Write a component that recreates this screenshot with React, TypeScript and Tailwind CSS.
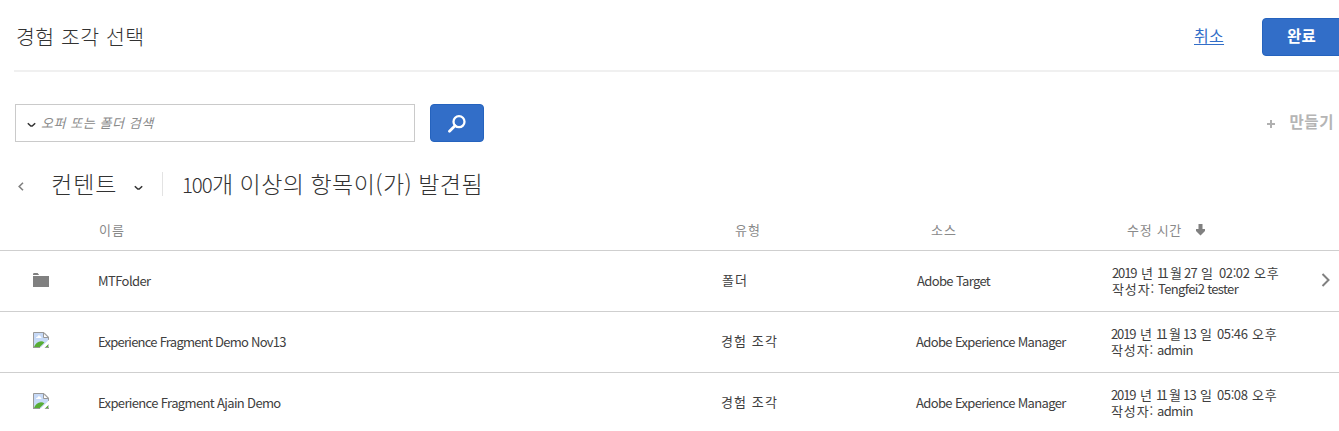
import React from "react";

type Item = {
  kind: "folder" | "image";
  name: string;
  nameClass: string;
  type: string;
  source: string;
  day: string;
  time: string;
  author: string;
};

const items: Item[] = [
  {
    kind: "folder",
    name: "MTFolder",
    nameClass: "tracking-[-0.58px]",
    type: "폴더",
    source: "Adobe Target",
    day: "27",
    time: "02:02",
    author: "Tengfei2 tester",
  },
  {
    kind: "image",
    name: "Experience Fragment Demo Nov13",
    nameClass: "tracking-[-0.74px]",
    type: "경험 조각",
    source: "Adobe Experience Manager",
    day: "13",
    time: "05:46",
    author: "admin",
  },
  {
    kind: "image",
    name: "Experience Fragment Ajain Demo",
    nameClass: "tracking-[-0.64px]",
    type: "경험 조각",
    source: "Adobe Experience Manager",
    day: "13",
    time: "05:08",
    author: "admin",
  },
];

function Chevron() {
  return (
    <svg width="9" height="6" viewBox="0 0 9 6" fill="none" className="shrink-0">
      <path d="M.8 1.2L3.8 4.1H5.2L8.2 1.2" stroke="#333" strokeWidth="1.5" />
    </svg>
  );
}

function FolderIcon() {
  return (
    <svg width="16" height="14" viewBox="0 0 16 14" fill="#808080">
      <path d="M0 2V1.2Q0 0 1.2 0H4.6L6.2 2Z" />
      <path d="M0 3H16V14H0Z" />
    </svg>
  );
}

function MissingImage() {
  return (
    <svg width="16" height="16" viewBox="0 0 16 16" fill="none">
      <path d="M.5 .5H11L15.5 5V15.5H.5Z" fill="#c6d9f7" />
      <path d="M3 6Q3 4.4 4.6 4.4Q5.2 2.7 6.6 3.4Q7.9 3.8 7.7 4.8Q8.7 5 8.5 6Z" fill="#fff" />
      <path d="M1 15Q3.4 9.4 8 9.3Q10 9.3 11.4 10.6L6.8 15Z" fill="#57ad35" />
      <path d="M12 15L15 12V15Z" fill="#57ad35" />
      <path d="M.5 16V.5H11L15.5 5V8M0 15.5H7M11.5 15.5H16V12" stroke="#999" />
      <path d="M10.5 .8V5.5H15.4Z" fill="#fff" stroke="#999" />
      <path d="M7.2 16L16 7.4V11.4L11.4 16Z" fill="#fff" />
    </svg>
  );
}

function Row({ item }: { item: Item }) {
  const folder = item.kind === "folder";
  return (
    <div className="flex h-[61px] items-center border-t border-[#cfcfcf] pl-[33px] text-[13px] leading-4 text-[#404040]">
      <div className={folder ? "w-[65px] shrink-0 pb-0.5" : "w-[65px] shrink-0 pb-[5px]"}>
        {folder ? <FolderIcon /> : <MissingImage />}
      </div>
      <div className={`w-[624px] shrink-0 ${item.nameClass}`}>{item.name}</div>
      <div className={`w-[195px] shrink-0 pb-0.5 tracking-[1.1px] ${folder ? "" : "-ml-px"}`}>{item.type}</div>
      <div className="w-[195px] shrink-0 tracking-[-0.64px]">{item.source}</div>
      <div className="w-[208px] shrink-0">
        <div className="flex">
          <span className="w-[29px] tracking-[-1.1px]">2019</span>
          <span className="w-[16px]">년</span>
          <span className="w-[13px] tracking-[-2.6px]">11</span>
          <span className="w-[14px]">월</span>
          <span className="w-[17px] tracking-[-0.8px]">{item.day}</span>
          <span className={folder ? "w-[18px]" : "w-[17px]"}>일</span>
          <span className="w-[35px] tracking-[-0.4px]">{item.time}</span>
          <span className="tracking-[0.8px]">오후</span>
        </div>
        <div className="flex">
          <span className="w-[46px] tracking-[0.9px]">작성자:</span>
          <span className="tracking-[-0.64px]">{item.author}</span>
        </div>
      </div>
      {folder && (
        <svg width="10" height="14" viewBox="0 0 10 14" fill="none" className="mb-0.5 ml-px shrink-0">
          <path d="M1.5 1L7.5 7L1.5 13" stroke="#808080" strokeWidth="2" />
        </svg>
      )}
    </div>
  );
}

export default function App() {
  return (
    <div
      lang="ko"
      className="flex h-[431px] w-[1339px] flex-col overflow-hidden whitespace-nowrap bg-white font-['Noto_Sans_CJK_KR',sans-serif] text-[#4b4b4b]"
    >
      <header className="ml-[14px] flex h-[72px] shrink-0 items-center border-b-2 border-[#f0f0f0] pl-0.5">
        <h1 className="w-[1178px] shrink-0 pt-0.5 text-[20.5px] font-light leading-7 tracking-[0.5px] text-[#323232]">경험 조각 선택</h1>
        <a className="w-[68px] shrink-0 text-[16px] leading-6 tracking-[0.3px] text-[#326ec8] underline underline-offset-2">취소</a>
        <button className="mt-1 h-[38px] w-[90px] shrink-0 rounded-l border border-[#2563be] bg-[#326ec8] pb-0.5 pl-6 text-left text-[15.5px] font-bold tracking-[0.3px] text-white">
          완료
        </button>
      </header>

      <div className="mt-8 flex h-[38px] shrink-0 items-center pl-[15px]">
        <div className="flex h-[38px] w-[400px] items-center gap-[5px] border border-[#cacaca] pl-[11px]">
          <div className="pt-1">
            <Chevron />
          </div>
          <span className="pb-px text-[13px] italic tracking-[0.55px] text-[#8a8a8a]">오퍼 또는 폴더 검색</span>
        </div>
        <button className="ml-[15px] flex h-[38px] w-[54px] items-center justify-center rounded border border-[#2563be] bg-[#326ec8]">
          <svg width="18" height="18" viewBox="0 0 18 18" fill="none" className="mt-0.5">
            <circle cx="11" cy="6.7" r="5.5" stroke="#fff" strokeWidth="2.3" />
            <path d="M7 10.7L1.5 16.2" stroke="#fff" strokeWidth="2.8" strokeLinecap="round" />
          </svg>
        </button>
        <div className="ml-auto flex items-center gap-[14px] pr-[5px] text-[#b5b5b5]">
          <svg width="8" height="8" viewBox="0 0 8 8" className="mt-0.5">
            <path d="M4 0V8M0 4H8" stroke="#b0b0b0" strokeWidth="2" />
          </svg>
          <span className="-mt-0.5 pb-[3px] text-[15.5px] font-bold leading-6 tracking-[0.6px]">만들기</span>
        </div>
      </div>

      <div className="mt-[26px] flex h-8 shrink-0 items-center pl-[18px] text-[23px] font-light leading-8 text-[#323232]">
        <svg width="6" height="9" viewBox="0 0 6 9" fill="none" className="mt-1">
          <path d="M5 .7L1.2 4.5L5 8.3" stroke="#808080" strokeWidth="1.6" />
        </svg>
        <span className="-mt-[3px] ml-[27px] w-[83px] tracking-[1px]">컨텐트</span>
        <div className="mt-2 w-7">
          <Chevron />
        </div>
        <span className="h-6 w-5 border-l border-[#e3e3e3]" />
        <span className="-mt-px flex items-baseline">
          <span className="w-[30px] text-[20.5px] tracking-[-1.1px]">100</span>
          <span className="tracking-[0.45px] [word-spacing:-0.9px]">개 이상의 항목이(가) 발견됨</span>
        </span>
      </div>

      <div className="flex h-[50px] shrink-0 items-center pl-[99px] pt-[9px] text-[13px] leading-4 text-[#8a8a8a]">
        <span className="w-[636px] tracking-[1px]">이름</span>
        <span className="w-[196px] tracking-[1px]">유형</span>
        <span className="w-[196px] tracking-[1px]">소스</span>
        <span className="w-[69px] tracking-[0.7px]">수정 시간</span>
        <svg width="9" height="12" viewBox="0 0 9 12" fill="#808080">
          <path d="M2.5 0H6.5V5H9V7L4.5 11.5L0 7V5H2.5Z" />
        </svg>
      </div>

      <div className="shrink-0">
        {items.map((item) => (
          <Row key={item.name} item={item} />
        ))}
      </div>
    </div>
  );
}
